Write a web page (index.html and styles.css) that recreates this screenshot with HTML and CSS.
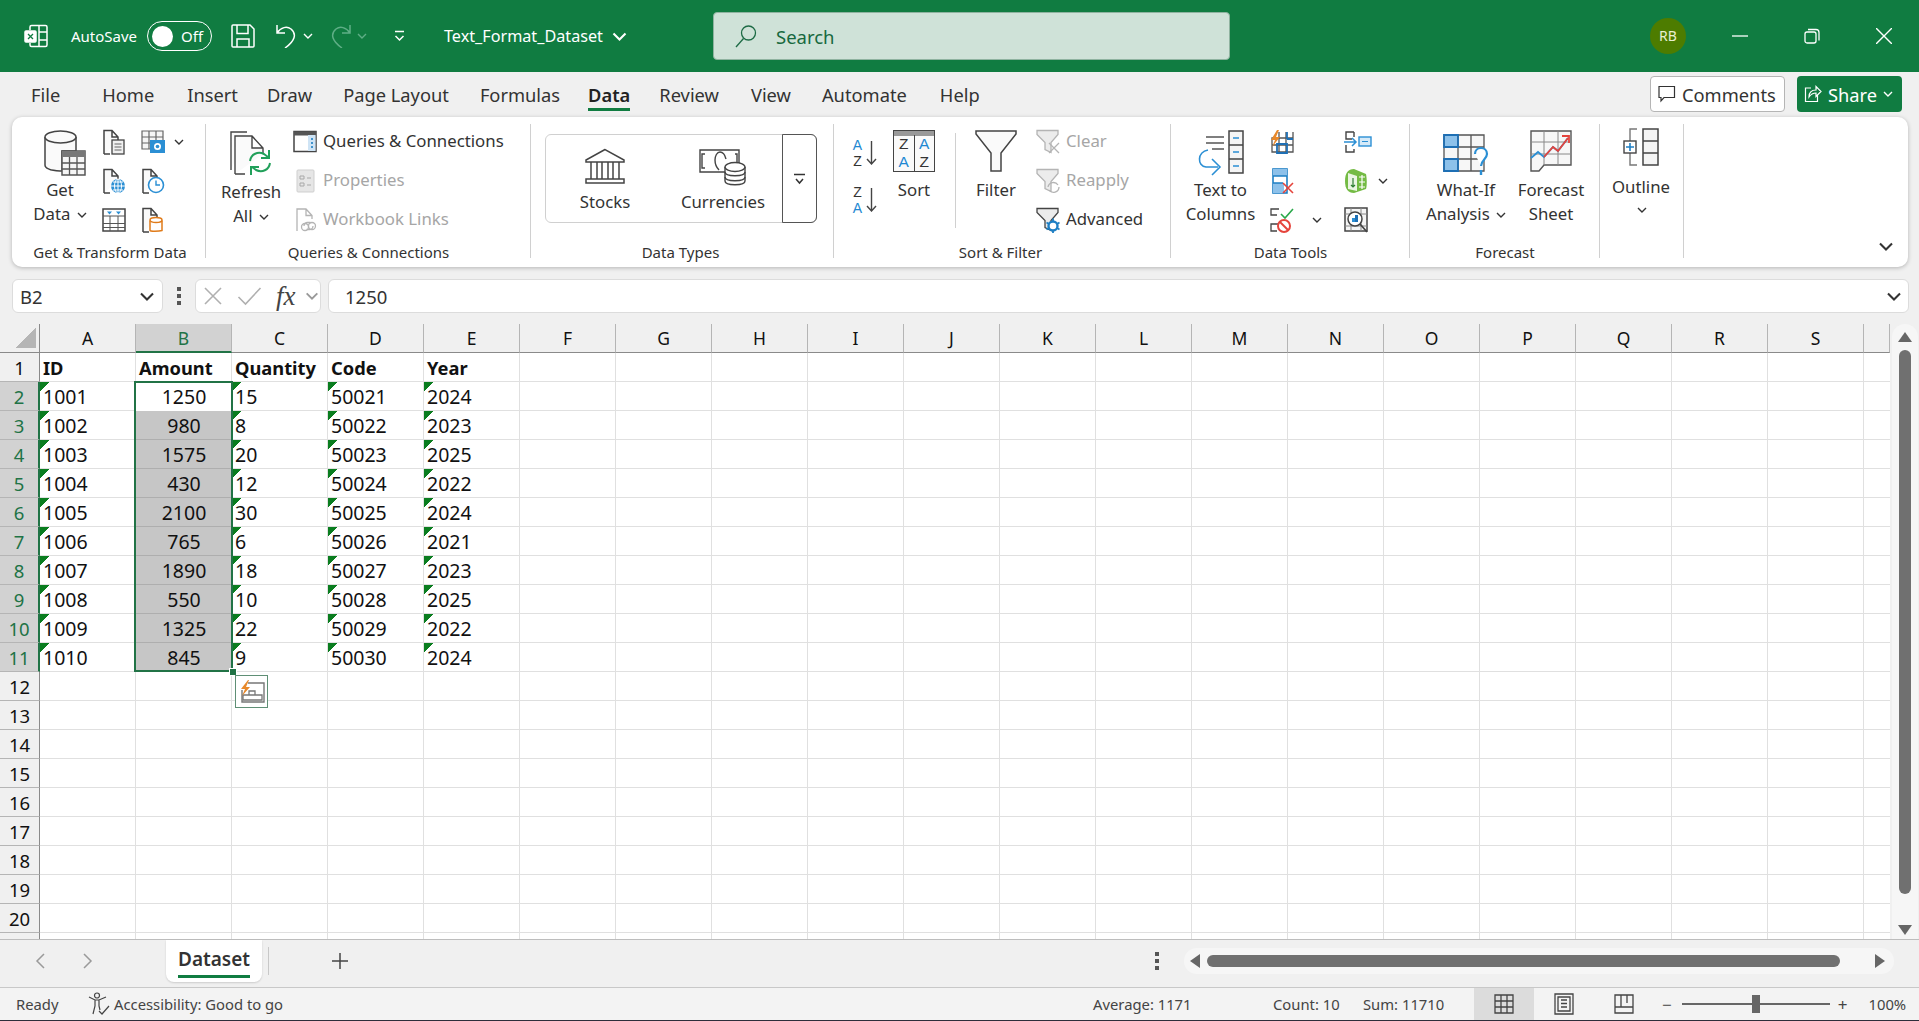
FILE: index.html
```html
<!DOCTYPE html>
<html>
<head lang="en">
    <meta charset="UTF-8">
    <meta name="viewport" content="width=device-width, initial-scale=1">
    <title>Text_Format_Dataset - Excel</title>
    <link rel="stylesheet" href="styles.css">
</head>
<body>
    <svg class="defs">
        <symbol id="chev" viewBox="0 0 10 6"><path d="M1 1l4 4 4-4" fill="none" stroke="currentColor" stroke-width="1.4"/></symbol>
        <symbol id="doc" viewBox="0 0 24 26"><path d="M2 25V1.500h8l6 6.500v5M2 25h6M10 2v6h6" fill="#fafafa" stroke="#444" stroke-width="1.500"/></symbol>
        <symbol id="funnel" viewBox="0 0 24 26"><path d="M1 1.500h21v4l-7 8v10l-6-3v-7l-8-8z" fill="#ececec" stroke="currentColor" stroke-width="1.300"/></symbol>
    </svg>

    <div class="titlebar">
        <svg class="t-logo" width="24" height="24" viewBox="0 0 24 24" fill="none" stroke="#fff" stroke-width="1.500">
            <path d="M6 6V3a1.500 1.500 0 0 1 1.500-1.500h14A1.500 1.500 0 0 1 23 3v18a1.500 1.500 0 0 1-1.500 1.500h-14A1.500 1.500 0 0 1 6 21v-2M15 1.500v21M15 8h8M15 16h8"/>
            <rect x="1" y="7" width="11" height="11" rx="1" fill="#fff"/>
            <path d="M4 10l5 5M9 10l-5 5" stroke="#107c41" stroke-width="1.300"/>
        </svg>
        <span class="autosave">AutoSave</span>
        <div class="toggle"><i class="knob"></i><span>Off</span></div>
        <svg class="t-save" width="24" height="24" viewBox="0 0 24 24" fill="none" stroke="#fff" stroke-width="1.500">
            <path d="M2 1h17l4 4v17a1 1 0 0 1-1 1H2a1 1 0 0 1-1-1V2a1 1 0 0 1 1-1zM6 1.500v8h11v-8M6 23v-8h12v8"/>
        </svg>
        <svg class="t-undo" width="23" height="24" viewBox="0 0 23 24" fill="none" stroke="#fff" stroke-width="1.500">
            <path d="M2 1v8h8M2 9c4-6 10-7 14-4 6 5 4 12-6 19"/>
        </svg>
        <svg class="t-chev" width="10" height="6"><use href="#chev"/></svg>
        <svg class="t-redo" width="23" height="24" viewBox="0 0 23 24" fill="none" stroke="#5fae86" stroke-width="1.500">
            <path d="M21 1v8h-8M21 9c-4-6-10-7-14-4-6 5-4 12 6 19"/>
        </svg>
        <svg class="t-chev dim" width="10" height="6"><use href="#chev"/></svg>
        <svg class="t-custom" width="11" height="12" viewBox="0 0 11 12" fill="none" stroke="#fff" stroke-width="1.500">
            <path d="M1 1.500h9M1.500 6l4 4 4-4"/>
        </svg>
        <span class="doc-name">Text_Format_Dataset</span>
        <svg class="t-chev2" width="15" height="9" viewBox="0 0 10 6"><use href="#chev"/></svg>
        <div class="search">
            <svg width="24" height="24" viewBox="0 0 24 24" fill="none" stroke="#1d6b45" stroke-width="1.300">
                <circle cx="14.500" cy="9" r="7"/><path d="M9.500 14.500L2 23"/>
            </svg>
            <span>Search</span>
        </div>
        <div class="avatar">RB</div>
        <div class="win-btns">
            <svg width="16" height="16" viewBox="0 0 16 16" stroke="#fff" stroke-width="1.300"><path d="M0 8h16"/></svg>
            <svg width="16" height="16" viewBox="0 0 16 16" fill="none" stroke="#fff" stroke-width="1.300"><rect x="1" y="4" width="11" height="11" rx="2"/><path d="M4 1.500h8a3 3 0 0 1 3 3v8"/></svg>
            <svg width="16" height="16" viewBox="0 0 16 16" stroke="#fff" stroke-width="1.400"><path d="M0 0l16 16M16 0L0 16"/></svg>
        </div>
    </div>

    <div class="tabs">
        <span class="tab tab-file">File</span>
        <span class="tab tab-home">Home</span>
        <span class="tab tab-insert">Insert</span>
        <span class="tab">Draw</span>
        <span class="tab">Page Layout</span>
        <span class="tab">Formulas</span>
        <span class="tab active">Data</span>
        <span class="tab tab-review">Review</span>
        <span class="tab">View</span>
        <span class="tab tab-automate">Automate</span>
        <span class="tab">Help</span>
        <div class="comments">
            <svg width="18" height="18" viewBox="0 0 18 18" fill="none" stroke="#333" stroke-width="1.200"><path d="M1 1.500h15.500v11H6l-3 3.500v-3.500H1z"/></svg>
            <span>Comments</span>
        </div>
        <div class="share">
            <svg width="18" height="18" viewBox="0 0 18 18" fill="none" stroke="#fff" stroke-width="1.200"><path d="M7 3H1.500v13.500h12V10M5 12c0-5 3-7 7-7V1.500l5 5-5 5V8c-3 0-5 1-7 4z"/></svg>
            <span>Share</span>
            <svg width="10" height="6"><use href="#chev"/></svg>
        </div>
    </div>

    <div class="ribbon">
        <div class="grp g1">
            <div class="grp-body">
                <div class="big w80">
                    <div class="big-ic">
                        <svg class="nudge" width="42" height="46" viewBox="0 0 42 46">
                            <path d="M1 7v28c0 3.500 6 5.500 15 6h2V21h14V7" fill="#fafafa" stroke="#444" stroke-width="1.500"/>
                            <ellipse cx="16.500" cy="7" rx="15.500" ry="6" fill="#fafafa" stroke="#444" stroke-width="1.500"/>
                            <rect x="18" y="21" width="23" height="24" fill="#f5f5f5" stroke="#555" stroke-width="1.500"/>
                            <rect x="18" y="21" width="23" height="6" fill="#777"/>
                            <path d="M18 33h23M18 39h23M25.500 27v18M33 27v18" stroke="#555" stroke-width="1.300"/>
                        </svg>
                    </div>
                    <span>Get</span>
                    <span>Data <svg class="chev" width="10" height="6"><use href="#chev"/></svg></span>
                </div>
                <div class="col w28 ctr">
                    <div class="row">
                        <svg width="24" height="26" viewBox="0 0 24 26"><use href="#doc" width="24" height="26"/><rect x="10" y="11" width="12" height="14" fill="#f0f0f0" stroke="#444" stroke-width="1.300"/><path d="M12.500 15h7M12.500 18h7M12.500 21h7" stroke="#666"/></svg>
                    </div>
                    <div class="row">
                        <svg width="24" height="26" viewBox="0 0 24 26"><use href="#doc" width="24" height="26"/><circle cx="16" cy="18" r="7" fill="#2b8fd4"/><path d="M9 18h14M16 11v14M11 14h10M11 22h10" stroke="#fff"/><ellipse cx="16" cy="18" rx="3.500" ry="7" fill="none" stroke="#fff"/></svg>
                    </div>
                    <div class="row">
                        <svg width="24" height="24" viewBox="0 0 24 24" fill="none"><rect x="1" y="1" width="22" height="22" stroke="#444" stroke-width="1.500"/><path d="M1 8h22M1 15.500h22M1 19.500h22M8 8v15M16 8v15" stroke="#555"/><path d="M5 3.500h5l-2.500 3zM14 3.500h5l-2.500 3z" fill="#2b8fd4"/></svg>
                    </div>
                </div>
                <div class="col">
                    <div class="row pl13 gap7">
                        <svg width="24" height="24" viewBox="0 0 24 24"><path d="M1 1h21v11H12v7H1zM8 1v18M15 1v11M1 7h21M1 13h11" fill="#f5f5f5" stroke="#666" stroke-width="1.200"/><rect x="9" y="10" width="15" height="13" fill="#2b8fd4"/><circle cx="16.500" cy="16.500" r="3.500" fill="#fff"/><circle cx="16.500" cy="16.500" r="1.800" fill="#2b8fd4"/></svg>
                        <svg class="chev" width="10" height="6"><use href="#chev"/></svg>
                    </div>
                    <div class="row pl13">
                        <svg width="24" height="26" viewBox="0 0 24 26"><use href="#doc" width="24" height="26"/><circle cx="15" cy="17" r="7.500" fill="#fff" stroke="#2b8fd4" stroke-width="1.600"/><path d="M15 12.500V17h4" fill="none" stroke="#2b8fd4" stroke-width="1.400"/></svg>
                    </div>
                    <div class="row pl13">
                        <svg width="24" height="26" viewBox="0 0 24 26"><use href="#doc" width="24" height="26"/><path d="M9 13.500v10c0 1 9 1 12 0v-10" fill="#fff" stroke="#e07b1a" stroke-width="1.500"/><ellipse cx="15" cy="13" rx="6" ry="2.500" fill="#fff" stroke="#e07b1a" stroke-width="1.500"/></svg>
                    </div>
                </div>
            </div>
            <div class="grp-label">Get &amp; Transform Data</div>
        </div>

        <div class="grp g2">
            <div class="grp-body">
                <div class="big w72">
                    <div class="big-ic low">
                        <svg width="42" height="46" viewBox="0 0 42 46" fill="none">
                            <path d="M1 40V2h16M5 44V6h17l11 12v6M5 44h10M22 6v12h11" fill="#fafafa" stroke="#444" stroke-width="1.400"/>
                            <path d="M20 31c1-7 8-10 14-7l4 3M40 33c-1 7-8 10-14 7l-4-3" stroke="#21a05a" stroke-width="2"/>
                            <path d="M39 20v8h-8M21 45v-8h8" stroke="#21a05a" stroke-width="2"/>
                        </svg>
                    </div>
                    <span>Refresh</span>
                    <span>All <svg class="chev" width="10" height="6"><use href="#chev"/></svg></span>
                </div>
                <div class="col pl6">
                    <div class="row gap6">
                        <svg width="24" height="24" viewBox="0 0 24 24"><rect x="1" y="1.500" width="22" height="20" fill="#fff" stroke="#444" stroke-width="1.500"/><rect x="1" y="1.500" width="22" height="4" fill="#555"/><rect x="15" y="5" width="7.500" height="16" fill="#cfe4f5"/><path d="M19 8v2M19 12v2M19 16v2" stroke="#1e7fc4" stroke-width="1.600"/></svg>
                        <span>Queries &amp; Connections</span>
                    </div>
                    <div class="row gap6 off">
                        <svg width="24" height="24" viewBox="0 0 24 24"><rect x="4" y="1" width="17" height="22" rx="1" fill="#e6e6e6" stroke="#cfcfcf"/><path d="M7 7h4v3H7zM7 14h4v3H7z" fill="none" stroke="#a8a8a8"/><path d="M14 9h4M14 16h4" stroke="#a8a8a8"/></svg>
                        <span>Properties</span>
                    </div>
                    <div class="row gap6 off">
                        <svg width="24" height="26" viewBox="0 0 24 26" fill="none" stroke="#b4b4b4" stroke-width="1.300"><path d="M4 24V2h9l6 6.500V12M13 2v6.500h6"/><path d="M11 19a3.500 3.500 0 0 1 3.500-3.500h3M20 19a3.500 3.500 0 0 1-3.500 3.500h-3"/><circle cx="12" cy="20" r="3.500"/><circle cx="19" cy="19" r="3.500"/></svg>
                        <span>Workbook Links</span>
                    </div>
                </div>
            </div>
            <div class="grp-label">Queries &amp; Connections</div>
        </div>

        <div class="grp g3">
            <div class="grp-body">
                <div class="gallery">
                    <div class="gal-item">
                        <div class="gal-ic">
                            <svg width="42" height="37" viewBox="0 0 42 37" fill="none" stroke="#444" stroke-width="1.500">
                                <path d="M21 1.500L2 12v2h38v-2zM2 31h38v4H2zM7 14v17M13 14v17M18 14v17M24 14v17M29 14v17M35 14v17"/>
                            </svg>
                        </div>
                        <span>Stocks</span>
                    </div>
                    <div class="gal-item">
                        <div class="gal-ic">
                            <svg width="48" height="38" viewBox="0 0 48 38" fill="none" stroke="#444" stroke-width="1.400">
                                <path d="M27 24H1V2h39v13M6 6H3v14h3M36 6h2v8"/>
                                <path d="M20 22c-3-3-4-6-4-10s2-8 5-8 5 3 6 7"/>
                                <path d="M26 19v14c0 5 20 5 20 0V19" fill="#fff"/>
                                <ellipse cx="36" cy="19" rx="10" ry="4.500" fill="#fff"/>
                                <path d="M26 24c0 5 20 5 20 0M26 29c0 5 20 5 20 0"/>
                            </svg>
                        </div>
                        <span>Currencies</span>
                    </div>
                    <div class="gal-more">
                        <svg width="11" height="12" viewBox="0 0 11 12" fill="none" stroke="#333" stroke-width="1.500"><path d="M0 1.500h11M2 6l3.500 4L9 6"/></svg>
                    </div>
                </div>
            </div>
            <div class="grp-label">Data Types</div>
        </div>

        <div class="grp g4">
            <div class="grp-body">
                <div class="sort-col">
                    <div class="sort-item">
                        <div class="az"><b class="blue">A</b><b>Z</b></div>
                        <svg width="11" height="24" viewBox="0 0 11 24" fill="none" stroke="#444" stroke-width="1.400"><path d="M5.500 0v23M1 18l4.500 5 4.500-5"/></svg>
                    </div>
                    <div class="sort-item">
                        <div class="az"><b>Z</b><b class="blue">A</b></div>
                        <svg width="11" height="24" viewBox="0 0 11 24" fill="none" stroke="#444" stroke-width="1.400"><path d="M5.500 0v23M1 18l4.500 5 4.500-5"/></svg>
                    </div>
                </div>
                <div class="big w60 ml7">
                    <div class="big-ic">
                        <div class="sort-box">
                            <div class="az tall"><b>Z</b><b class="blue">A</b></div>
                            <div class="az tall"><b class="blue">A</b><b>Z</b></div>
                        </div>
                    </div>
                    <span>Sort</span>
                </div>
                <div class="vsep"></div>
                <div class="big w80">
                    <div class="big-ic">
                        <svg width="42" height="42" viewBox="0 0 42 42" fill="#fafafa" stroke="#444" stroke-width="1.500"><path d="M1 1h40v3L26 23v18H16V23L1 4z"/></svg>
                    </div>
                    <span>Filter</span>
                </div>
                <div class="col">
                    <div class="row gap6 off">
                        <svg width="24" height="26" viewBox="0 0 24 26" color="#b4b4b4"><use href="#funnel" width="24" height="26"/><path d="M13 14l10 10M23 14L13 24" stroke="#b4b4b4" stroke-width="1.300"/></svg>
                        <span>Clear</span>
                    </div>
                    <div class="row gap6 off">
                        <svg width="24" height="26" viewBox="0 0 24 26" color="#b4b4b4"><use href="#funnel" width="24" height="26"/><path d="M12 19a5.500 5.500 0 0 1 10-2M23 19a5.500 5.500 0 0 1-10 3" fill="none" stroke="#b4b4b4" stroke-width="1.300"/></svg>
                        <span>Reapply</span>
                    </div>
                    <div class="row gap6">
                        <svg width="24" height="26" viewBox="0 0 24 26" color="#444"><use href="#funnel" width="24" height="26"/><circle cx="17" cy="19" r="4.500" fill="#fff" stroke="#1e7fc4" stroke-width="2.400"/><path d="M17 11.500v3M17 23.500v2.500M10.500 15.500l2.500 1.500M21 21l2.500 1.500M10.500 22.500l2.500-1.500M21 17l2.500-1.500" stroke="#1e7fc4" stroke-width="1.800"/></svg>
                        <span>Advanced</span>
                    </div>
                </div>
            </div>
            <div class="grp-label">Sort &amp; Filter</div>
        </div>

        <div class="grp g5">
            <div class="grp-body">
                <div class="big w99">
                    <div class="big-ic">
                        <svg width="46" height="46" viewBox="0 0 46 46" fill="none">
                            <path d="M8 7h18M8 13h18M14 19h12" stroke="#555" stroke-width="1.400"/>
                            <path d="M31 1h14v42H31z" fill="#f5f5f5" stroke="#444" stroke-width="1.500"/>
                            <path d="M31 15h14M31 29h14" stroke="#444" stroke-width="1.500"/>
                            <path d="M35 8h6M35 22h6M35 36h6" stroke="#2b8fd4" stroke-width="1.500"/>
                            <path d="M10 20C-1 22-1 36 8 37h12M14 29l8 8-8 8" stroke="#2b8fd4" stroke-width="1.600"/>
                        </svg>
                    </div>
                    <span>Text to</span>
                    <span>Columns</span>
                </div>
                <div class="col w74">
                    <div class="row">
                        <svg width="24" height="24" viewBox="0 0 24 24" fill="none"><path d="M2 22V8h21v14zM9 2v20M16 2v20M23 2v20M2 15h21" stroke="#555" stroke-width="1.300"/><path d="M7 14h10v9H7zM17 9h6M17 2v7" stroke="#1e6fb4" stroke-width="1.800"/><path d="M7 0L1 10h4l-3 7 8-10H6l3-7z" fill="#e8892b"/></svg>
                    </div>
                    <div class="row">
                        <svg width="24" height="26" viewBox="0 0 24 26" fill="none"><rect x="3" y="1" width="14" height="24" fill="#fff" stroke="#1e7fc4" stroke-width="1.600"/><rect x="3" y="1" width="14" height="7" fill="#8dc1ea"/><rect x="3" y="15" width="11" height="10" fill="#8dc1ea"/><path d="M3 8h14M3 15h10" stroke="#1e7fc4" stroke-width="1.300"/><path d="M13 15l10 10M23 15L13 25" stroke="#e5443c" stroke-width="1.600"/></svg>
                    </div>
                    <div class="row">
                        <svg width="24" height="26" viewBox="0 0 24 26" fill="none"><path d="M9 2H1v6h6M9 17H1v7h6" stroke="#444" stroke-width="1.300"/><path d="M11 7l4 4 8-9" stroke="#2aa84a" stroke-width="1.600"/><circle cx="14" cy="19" r="6" stroke="#e5443c" stroke-width="2"/><path d="M10 15l8 8" stroke="#e5443c" stroke-width="2"/></svg>
                        <svg class="chev ml18" width="10" height="6"><use href="#chev"/></svg>
                    </div>
                </div>
                <div class="col">
                    <div class="row">
                        <svg width="28" height="24" viewBox="0 0 28 24" fill="none"><path d="M10 2H2v7h6M2 15v7h8v-3M10 2v5" stroke="#444" stroke-width="1.400"/><path d="M0 12h12M8 8l4 4-4 4" stroke="#2b8fd4" stroke-width="1.500"/><rect x="15" y="7" width="12" height="9" fill="#d6eaf8" stroke="#2b8fd4" stroke-width="1.400"/><path d="M18 11.500h6" stroke="#2b8fd4"/></svg>
                    </div>
                    <div class="row gap8">
                        <svg width="24" height="26" viewBox="0 0 24 26"><path d="M10 1l12 5c1 5 1 12 0 15l-12 4c-6 0-9-4-9-12S4 1 10 1z" fill="#74bb44"/><path d="M4 5l9 3v15l-9-2z" fill="#fff" opacity=".85"/><path d="M7 17l2 2 2-2M9 10v9" fill="none" stroke="#2d7d32" stroke-width="1.200"/><path d="M15 9h6M15 14h6M15 19h6M18 7v14" stroke="#fff" stroke-width="1.200"/></svg>
                        <svg class="chev" width="10" height="6"><use href="#chev"/></svg>
                    </div>
                    <div class="row">
                        <svg width="24" height="26" viewBox="0 0 24 26" fill="none"><rect x="1" y="1" width="22" height="23" fill="#f5f5f5" stroke="#444" stroke-width="1.500"/><path d="M1 7h22M1 19h22M7 1v23M17 1v23" stroke="#888"/><circle cx="11" cy="12" r="7" fill="#fff" stroke="#444" stroke-width="1.500"/><rect x="8" y="11" width="3" height="4" fill="#2b8fd4"/><rect x="11" y="8" width="3" height="7" fill="#1e6fb4"/><path d="M16 17l7 8" stroke="#444" stroke-width="1.800"/></svg>
                    </div>
                </div>
            </div>
            <div class="grp-label">Data Tools</div>
        </div>

        <div class="grp g6">
            <div class="grp-body">
                <div class="big w112">
                    <div class="big-ic">
                        <svg width="46" height="46" viewBox="0 0 46 46" fill="none">
                            <rect x="1" y="5" width="40" height="37" fill="#f7f7f7"/>
                            <rect x="1" y="5" width="14" height="12" fill="#8dc1ea"/>
                            <rect x="1" y="29" width="14" height="12" fill="#8dc1ea"/>
                            <path d="M1 5h40v36H1zM15 5v36M28 5v36M1 17h40M1 29h40" stroke="#555" stroke-width="1.300"/>
                            <path d="M1 5h14v12H1zM1 29h14v12H1z" stroke="#1e6fb4" stroke-width="1.800"/>
                            <path d="M32 24c0-8 12-8 12 0 0 5-6 6-6 12" fill="#fff" stroke="#2b8fd4" stroke-width="2.200"/>
                            <path d="M38 40v5" stroke="#2b8fd4" stroke-width="2.400"/>
                        </svg>
                    </div>
                    <span>What-If</span>
                    <span>Analysis <svg class="chev" width="10" height="6"><use href="#chev"/></svg></span>
                </div>
                <div class="big w58">
                    <div class="big-ic">
                        <svg width="42" height="42" viewBox="0 0 42 42" fill="none">
                            <path d="M1 1h40v34H14l-5 6H1z" fill="#f7f7f7" stroke="#555" stroke-width="1.400"/>
                            <path d="M1 12h40M1 24h40M14 1v34M28 1v34" stroke="#888"/>
                            <path d="M1 28l7-6 6 5 9-10 5 4 10-13" stroke="#2b8fd4" stroke-width="1.800"/>
                            <path d="M14 27l9-10 5 4 10-13" stroke="#e5443c" stroke-width="1.800"/>
                            <path d="M32 6h7v7" stroke="#e5443c" stroke-width="1.800"/>
                        </svg>
                    </div>
                    <span>Forecast</span>
                    <span>Sheet</span>
                </div>
            </div>
            <div class="grp-label">Forecast</div>
        </div>

        <div class="grp g7">
            <div class="grp-body">
                <div class="big w82">
                    <div class="big-ic short">
                        <svg width="36" height="38" viewBox="0 0 36 38" fill="none">
                            <path d="M14 1H7v12M7 25v12h7" stroke="#777" stroke-width="1.400"/>
                            <path d="M20 1h15v36H20zM20 13h15M20 25h15" fill="#f5f5f5" stroke="#444" stroke-width="1.500"/>
                            <rect x="1" y="13" width="12" height="12" fill="#fff" stroke="#444" stroke-width="1.400"/>
                            <path d="M3 19h8M7 15v8" stroke="#1e7fc4" stroke-width="1.600"/>
                        </svg>
                    </div>
                    <span>Outline</span>
                    <svg class="chev o-chev" width="10" height="6"><use href="#chev"/></svg>
                </div>
            </div>
        </div>

        <svg class="collapse" width="16" height="9" viewBox="0 0 10 6"><use href="#chev"/></svg>
    </div>

    <div class="formula">
        <div class="namebox">
            <span>B2</span>
            <svg width="16" height="9" viewBox="0 0 10 6"><use href="#chev"/></svg>
        </div>
        <div class="dots"><i></i><i></i><i></i></div>
        <div class="fx-box">
            <svg width="20" height="20" viewBox="0 0 20 20" stroke="#b0b0b0" stroke-width="1.600"><path d="M2 2l16 16M18 2L2 18"/></svg>
            <svg width="25" height="20" viewBox="0 0 24 20" fill="none" stroke="#b0b0b0" stroke-width="1.600"><path d="M1 11l7 7L23 2"/></svg>
            <span class="fx">fx</span>
            <svg class="fx-chev" width="14" height="8" viewBox="0 0 10 6"><use href="#chev"/></svg>
        </div>
        <div class="fbar">
            <span>1250</span>
            <svg width="16" height="9" viewBox="0 0 10 6"><use href="#chev"/></svg>
        </div>
    </div>

    <div class="sheet">
        <div class="grid">
            <div class="corner"></div>
            <div class="ch">A</div><div class="ch sel">B</div><div class="ch">C</div><div class="ch">D</div><div class="ch">E</div><div class="ch">F</div><div class="ch">G</div><div class="ch">H</div><div class="ch">I</div><div class="ch">J</div><div class="ch">K</div><div class="ch">L</div><div class="ch">M</div><div class="ch">N</div><div class="ch">O</div><div class="ch">P</div><div class="ch">Q</div><div class="ch">R</div><div class="ch">S</div><div class="ch"></div>

            <div class="rh">1</div><div class="c b">ID</div><div class="c b">Amount</div><div class="c b">Quantity</div><div class="c b">Code</div><div class="c b">Year</div>
            <div class="rh sel">2</div><div class="c t">1001</div><div class="c m first">1250</div><div class="c t">15</div><div class="c t">50021</div><div class="c t">2024</div>
            <div class="rh sel">3</div><div class="c t">1002</div><div class="c m">980</div><div class="c t">8</div><div class="c t">50022</div><div class="c t">2023</div>
            <div class="rh sel">4</div><div class="c t">1003</div><div class="c m">1575</div><div class="c t">20</div><div class="c t">50023</div><div class="c t">2025</div>
            <div class="rh sel">5</div><div class="c t">1004</div><div class="c m">430</div><div class="c t">12</div><div class="c t">50024</div><div class="c t">2022</div>
            <div class="rh sel">6</div><div class="c t">1005</div><div class="c m">2100</div><div class="c t">30</div><div class="c t">50025</div><div class="c t">2024</div>
            <div class="rh sel">7</div><div class="c t">1006</div><div class="c m">765</div><div class="c t">6</div><div class="c t">50026</div><div class="c t">2021</div>
            <div class="rh sel">8</div><div class="c t">1007</div><div class="c m">1890</div><div class="c t">18</div><div class="c t">50027</div><div class="c t">2023</div>
            <div class="rh sel">9</div><div class="c t">1008</div><div class="c m">550</div><div class="c t">10</div><div class="c t">50028</div><div class="c t">2025</div>
            <div class="rh sel">10</div><div class="c t">1009</div><div class="c m">1325</div><div class="c t">22</div><div class="c t">50029</div><div class="c t">2022</div>
            <div class="rh sel">11</div><div class="c t">1010</div><div class="c m">845</div><div class="c t">9</div><div class="c t">50030</div><div class="c t">2024</div>
            <div class="rh">12</div>
            <div class="rh">13</div>
            <div class="rh">14</div>
            <div class="rh">15</div>
            <div class="rh">16</div>
            <div class="rh">17</div>
            <div class="rh">18</div>
            <div class="rh">19</div>
            <div class="rh">20</div>
            <div class="rh"></div>

            <div class="selection"><i class="handle"></i></div>
            <div class="flash">
                <svg width="26" height="24" viewBox="0 0 26 24" fill="none">
                    <path d="M9 3h16v19H3V10" stroke="#777" stroke-width="1.400"/>
                    <path d="M4 15h19v5H4zM10 15v-4h6v4" stroke="#777" stroke-width="1.300"/>
                    <path d="M9 0L2 9h4l-3 7 8-9H7l3-7z" fill="#e8892b"/>
                </svg>
            </div>
        </div>
        <div class="vscroll">
            <svg width="14" height="10" viewBox="0 0 14 10" fill="#666"><path d="M7 0l7 10H0z"/></svg>
            <div class="vthumb"></div>
            <svg width="14" height="10" viewBox="0 0 14 10" fill="#666"><path d="M7 10l7-10H0z"/></svg>
        </div>
    </div>

    <div class="tabbar">
        <svg class="nav" width="10" height="16" viewBox="0 0 10 16" fill="none" stroke="#9a9a9a" stroke-width="1.500"><path d="M9 1L2 8l7 7"/></svg>
        <svg class="nav nav2" width="10" height="16" viewBox="0 0 10 16" fill="none" stroke="#9a9a9a" stroke-width="1.500"><path d="M1 1l7 7-7 7"/></svg>
        <div class="sheet-tab"><span>Dataset</span></div>
        <i class="tab-sep"></i>
        <svg class="plus" width="18" height="18" viewBox="0 0 18 18" stroke="#444" stroke-width="1.500"><path d="M9 1v16M1 9h16"/></svg>
        <div class="dots hdots"><i></i><i></i><i></i></div>
        <div class="hscroll">
            <svg width="10" height="14" viewBox="0 0 10 14" fill="#666"><path d="M0 7l10-7v14z"/></svg>
            <div class="hthumb"></div>
            <svg width="10" height="14" viewBox="0 0 10 14" fill="#666"><path d="M10 7L0 0v14z"/></svg>
        </div>
    </div>

    <div class="status">
        <span class="ready">Ready</span>
        <svg class="acc-ic" width="22" height="24" viewBox="0 0 22 24" fill="none" stroke="#444" stroke-width="1.200">
            <circle cx="9" cy="3.500" r="2.500"/><path d="M1 5l6 3h4l7-3M7 8v6l-2 8M11 8v6l1 4M11 19l3 3 7-8"/>
        </svg>
        <span class="acc">Accessibility: Good to go</span>
        <span class="st-avg">Average: 1171</span>
        <span class="st-count">Count: 10</span>
        <span class="st-sum">Sum: 11710</span>
        <div class="view on">
            <svg width="20" height="20" viewBox="0 0 20 20" fill="none" stroke="#444" stroke-width="1.300"><path d="M1 1h18v18H1zM1 7h18M1 13h18M7 1v18M13 1v18"/></svg>
        </div>
        <div class="view">
            <svg width="20" height="22" viewBox="0 0 20 22" fill="none" stroke="#444" stroke-width="1.300"><path d="M1 1h18v20H1zM4 4h12v14H4zM7 7h6M7 10.500h6M7 14h6"/></svg>
        </div>
        <div class="view">
            <svg width="20" height="20" viewBox="0 0 20 20" fill="none" stroke="#444" stroke-width="1.300"><path d="M1 1h18v18H1zM1 13h18M7 1v12M13 1v8"/></svg>
        </div>
        <span class="zm">&minus;</span>
        <div class="slider"><i></i></div>
        <span class="zm">+</span>
        <span class="zoom-val">100%</span>
    </div>
</body>
</html>
```

FILE: styles.css
```css
*{
    box-sizing: border-box;
}
html, body{
    margin: 0;
    padding: 0;
    height: 100%;
}
body{
    width: 1919px;
    height: 1021px;
    overflow: hidden;
    background-color: #f0f0f0;
    color: #333;
    font-family: "Noto Sans", "Open Sans", sans-serif;
    font-size: 16px;
}
svg{
    display: block;
    flex: none;
}
.defs{
    display: none;
}

/* title bar */
.titlebar{
    display: flex;
    align-items: center;
    height: 72px;
    padding-left: 24px;
    background-color: #107c41;
    color: #fff;
}
.autosave{
    margin-left: 23px;
    width: 76px;
    font-size: 15px;
}
.toggle{
    display: flex;
    align-items: center;
    width: 65px;
    height: 30px;
    padding-left: 4px;
    border: 1px solid #fff;
    border-radius: 15px;
    font-size: 15px;
}
.knob{
    width: 21px;
    height: 21px;
    margin-right: 8px;
    border-radius: 50%;
    background-color: #fff;
}
.t-save{
    margin-left: 19px;
}
.t-undo{
    margin-left: 20px;
}
.t-chev{
    margin-left: 5px;
    color: #fff;
}
.t-chev.dim{
    color: #5fae86;
}
.t-redo{
    margin-left: 16px;
}
.t-custom{
    margin-left: 27px;
}
.doc-name{
    margin-left: 39px;
    width: 168px;
    font-size: 16.200px;
    white-space: nowrap;
}
.t-chev2{
    color: #fff;
}
.search{
    display: flex;
    align-items: center;
    gap: 18px;
    width: 517px;
    height: 48px;
    margin-left: 86px;
    padding-left: 20px;
    border: 1px solid #8fb3a0;
    border-radius: 4px;
    background-color: #cfe2d8;
    color: #17693f;
    font-size: 18.500px;
}
.avatar{
    width: 36px;
    height: 36px;
    margin-left: 420px;
    border-radius: 50%;
    background-color: #4d7c00;
    color: #e8efd0;
    font-size: 14px;
    line-height: 36px;
    text-align: center;
}
.win-btns{
    display: flex;
    gap: 56px;
    margin-left: 46px;
}

/* menu tabs */
.tabs{
    display: flex;
    align-items: flex-start;
    gap: 31px;
    height: 45px;
    padding-left: 31px;
    color: #333;
    font-size: 18.300px;
}
.tab{
    height: 39px;
    padding-top: 11px;
    line-height: 24px;
}
.tab-file{
    margin-right: 11px;
}
.tab-home{
    margin-right: 2px;
}
.tab-insert{
    margin-right: -2px;
}
.tab.active{
    margin-left: -3px;
    margin-right: -2px;
    border-bottom: 3px solid #107c41;
    color: #222;
    font-weight: 600;
}
.tab-review{
    margin-right: 1px;
}
.tab-automate{
    margin-right: 2px;
}
.comments{
    display: flex;
    align-items: center;
    gap: 6px;
    height: 36px;
    margin-top: 4px;
    margin-left: auto;
    padding-left: 7px;
    width: 135px;
    border: 1px solid #b5b5b5;
    border-radius: 4px;
    background-color: #fff;
}
.share{
    display: flex;
    align-items: center;
    gap: 6px;
    width: 105px;
    height: 36px;
    margin-top: 4px;
    margin-left: -19px;
    margin-right: 17px;
    padding-left: 7px;
    border-radius: 4px;
    background-color: #107c41;
    color: #fff;
}

/* ribbon */
.ribbon{
    display: flex;
    height: 150px;
    margin: 0 11px 0 12px;
    padding-top: 5px;
    border-radius: 10px;
    background-color: #fff;
    box-shadow: 0 1px 4px rgba(0,0,0,.25);
    font-size: 16.800px;
}
.grp{
    flex: none;
    height: 141px;
    background: linear-gradient(#d0d0d0, #d0d0d0) right 2px / 1px 134px no-repeat;
}
.g1{ width: 194px; padding-left: 8px; }
.g2{ width: 325px; padding-left: 9px; }
.g3{ width: 303px; padding-left: 14px; }
.g4{ width: 337px; padding-left: 17px; }
.g5{ width: 239px; }
.g6{ width: 190px; }
.g7{ width: 84px; }
.grp-body{
    display: flex;
    height: 120px;
}
.grp-label{
    font-size: 15px;
    line-height: 20px;
    text-align: center;
}
.g1 .grp-label{ margin-left: -6px; }
.g2 .grp-label{ margin-left: -9px; }
.g3 .grp-label{ margin-left: -14px; padding-right: 4px; }
.g4 .grp-label{ margin-left: -17px; padding-right: 4px; }
.big{
    display: flex;
    flex: none;
    flex-direction: column;
    align-items: center;
    line-height: 24px;
    white-space: nowrap;
}
.big-ic{
    height: 56px;
    padding-top: 8px;
}
.big-ic.low{
    height: 58px;
}
.big-ic.short{
    height: 53px;
    padding-top: 6px;
}
.nudge{
    margin-left: 10px;
}
.chev{
    display: inline-block;
    vertical-align: 2px;
    color: #333;
    margin-left: 2px;
}
.o-chev{
    margin-top: 8px;
}
.w28{ width: 28px; }
.w58{ width: 58px; }
.w60{ width: 60px; }
.w72{ width: 72px; }
.w74{ width: 74px; }
.w80{ width: 80px; }
.w82{ width: 82px; }
.w99{ width: 99px; }
.w112{ width: 112px; }
.ml7{ margin-left: 7px; }
.ml18{ margin-left: 18px; }
.pl6{ padding-left: 6px; }
.col{
    display: flex;
    flex: none;
    flex-direction: column;
}
.col.ctr .row{
    justify-content: center;
}
.row{
    display: flex;
    align-items: center;
    height: 39px;
    white-space: nowrap;
}
.row span{
    margin-top: -2px;
}
.pl13{ padding-left: 13px; }
.gap6{ gap: 6px; }
.gap7{ gap: 7px; }
.gap8{ gap: 8px; }
.off{
    color: #a6a6a6;
}
.gallery{
    display: flex;
    width: 272px;
    height: 89px;
    margin-top: 12px;
    border: 1px solid #d0d0d0;
    border-radius: 6px;
}
.gal-item{
    display: flex;
    flex-direction: column;
    align-items: center;
    width: 118px;
    line-height: 24px;
}
.gal-ic{
    height: 55px;
    padding-top: 13px;
}
.gal-more{
    display: flex;
    align-items: center;
    justify-content: center;
    flex: 1;
    margin: -1px -1px -1px 0;
    border: 1px solid #555;
    border-radius: 0 6px 6px 0;
}
.sort-col{
    width: 26px;
    padding-top: 15px;
}
.sort-item{
    display: flex;
    align-items: center;
    justify-content: space-between;
    height: 32px;
    margin-bottom: 15px;
}
.az{
    display: flex;
    flex-direction: column;
    width: 13px;
    color: #333;
    font-family: "Liberation Sans", sans-serif;
    font-size: 14px;
    line-height: 16px;
    text-align: center;
}
.az b{
    font-weight: 400;
}
.az .blue{
    color: #1e88d2;
}
.sort-box{
    display: flex;
    width: 42px;
    height: 42px;
    padding-top: 4px;
    border: 1.500px solid #444;
    background: linear-gradient(#999, #999) top / 100% 5px no-repeat #fafafa;
}
.az.tall{
    flex: 1;
    line-height: 18px;
    font-size: 15.500px;
}
.az.tall + .az.tall{
    border-left: 1px solid #444;
}
.vsep{
    flex: none;
    width: 1px;
    height: 95px;
    margin: 11px 0 0 11px;
    background-color: #d0d0d0;
}
.collapse{
    margin-left: auto;
    margin-right: 14px;
    margin-bottom: 16px;
    align-self: flex-end;
    color: #333;
}

/* formula bar */
.formula{
    display: flex;
    align-items: center;
    height: 34px;
    margin-top: 12px;
    padding-left: 12px;
    font-size: 16px;
}
.namebox{
    display: flex;
    align-items: center;
    justify-content: space-between;
    width: 151px;
    height: 34px;
    padding: 0 7px;
    border: 1px solid #dcdcdc;
    border-radius: 6px;
    background-color: #fff;
    font-size: 18.500px;
}
.dots{
    display: flex;
    flex-direction: column;
    gap: 3px;
    width: 4px;
    margin: 0 14px;
}
.dots i{
    width: 4px;
    height: 4px;
    background-color: #555;
}
.fx-box{
    display: flex;
    align-items: center;
    width: 126px;
    height: 34px;
    padding-left: 7px;
    border: 1px solid #dcdcdc;
    border-radius: 6px;
    background-color: #fff;
}
.fx-box svg + svg{
    margin-left: 14px;
}
.fx{
    margin-left: 14px;
    color: #444;
    font-family: "Liberation Serif", serif;
    font-size: 27px;
    font-style: italic;
    line-height: 30px;
}
.fx-box .fx-chev{
    margin-left: 9px;
    color: #999;
}
.fbar{
    display: flex;
    align-items: center;
    justify-content: space-between;
    width: 1581px;
    height: 34px;
    margin-left: 7px;
    padding: 0 6px 0 16px;
    border: 1px solid #dcdcdc;
    border-radius: 6px;
    background-color: #fff;
    font-size: 18.500px;
}

/* grid */
.sheet{
    display: flex;
    height: 615px;
    margin-top: 11px;
}
.grid{
    position: relative;
    display: grid;
    grid-template-columns: 40px repeat(19, 96px) 26px;
    grid-auto-rows: 29px;
    width: 1890px;
    overflow: hidden;
    background-color: #fff;
    background-image: linear-gradient(to left, #e0e0e0 1px, transparent 1px), linear-gradient(to top, #e0e0e0 1px, transparent 1px);
    background-position: 40px 0, 0 0;
    background-size: 96px 100%, 100% 29px;
    color: #111;
    font-size: 19.500px;
}
.corner{
    border-right: 1px solid #8a8a8a;
    border-bottom: 1px solid #8a8a8a;
    background: linear-gradient(to bottom right, transparent 50%, #b5b5b5 50%) 15px 4px / 21px 20px no-repeat #f0f0f0;
}
.ch{
    border-right: 1px solid #b5b5b5;
    border-bottom: 1px solid #8a8a8a;
    background-color: #f0f0f0;
    font-size: 17.500px;
    line-height: 29px;
    text-align: center;
}
.ch.sel{
    border-bottom: 2px solid #217346;
    background-color: #d2d2d2;
    color: #217346;
}
.rh{
    grid-column: 1;
    border-right: 1px solid #8a8a8a;
    border-bottom: 1px solid #b5b5b5;
    background-color: #f0f0f0;
    font-size: 18.500px;
    line-height: 29px;
    text-align: center;
}
.rh.sel{
    border-right: 2px solid #217346;
    background-color: #d2d2d2;
    color: #217346;
}
.c{
    padding-left: 3px;
    line-height: 29px;
    white-space: nowrap;
}
.c.b{
    font-weight: 700;
    font-size: 18.300px;
}
.c.t{
    background: linear-gradient(135deg, #0a7d1f 50%, transparent 50%) 0 0 / 10px 9px no-repeat;
}
.c.m{
    border-bottom: 1px solid #aeaeae;
    background-color: #c6c6c6;
    text-align: center;
    padding-left: 0;
}
.c.m.first{
    border-bottom: 0;
    background-color: #fff;
}
.selection{
    position: absolute;
    left: 134px;
    top: 57px;
    width: 99px;
    height: 291px;
    border: 2.500px solid #217346;
}
.handle{
    position: absolute;
    right: -6px;
    bottom: -6px;
    width: 8px;
    height: 8px;
    border: 1px solid #fff;
    background-color: #217346;
}
.flash{
    position: absolute;
    left: 235px;
    top: 351px;
    display: flex;
    align-items: center;
    justify-content: center;
    width: 33px;
    height: 33px;
    border: 1px solid #5f8f75;
    background-color: #fff;
}
.vscroll{
    display: flex;
    flex-direction: column;
    align-items: center;
    width: 26px;
    margin-left: 2px;
    padding-top: 8px;
    border-radius: 13px 13px 0 0;
    background-color: #f6f6f6;
}
.vthumb{
    width: 12px;
    height: 544px;
    margin: 8px 0 31px;
    border-radius: 6px;
    background-color: #707070;
}

/* sheet tabs */
.tabbar{
    display: flex;
    align-items: center;
    height: 48px;
    padding-left: 35px;
    border-top: 1px solid #bdbdbd;
    padding-bottom: 5px;
}
.nav2{
    margin-left: 38px;
}
.sheet-tab{
    align-self: flex-start;
    width: 96px;
    height: 42px;
    margin-left: 73px;
    padding: 3px 0 0 12px;
    border-radius: 0 0 8px 8px;
    background-color: #fff;
    box-shadow: 0 1px 2px rgba(0,0,0,.15);
    color: #333;
    font-size: 19px;
    font-weight: 600;
}
.sheet-tab span{
    display: block;
    width: 72px;
    height: 35px;
    border-bottom: 3px solid #107c41;
    line-height: 32px;
}
.tab-sep{
    width: 1px;
    height: 28px;
    margin-left: 6px;
    background-color: #c8c8c8;
}
.plus{
    margin-left: 62px;
}
.hdots{
    margin: 0 0 0 806px;
}
.hscroll{
    display: flex;
    align-items: center;
    width: 710px;
    height: 26px;
    margin-left: 25px;
    padding: 0 6px;
    border-radius: 13px;
    background-color: #f6f6f6;
}
.hthumb{
    width: 633px;
    height: 12px;
    margin: 0 35px 0 7px;
    border-radius: 6px;
    background-color: #707070;
}

/* status bar */
.status{
    display: flex;
    align-items: center;
    height: 34px;
    padding-left: 16px;
    border-top: 1px solid #c8c8c8;
    border-bottom: 1px solid #2d2d3a;
    background-color: #f3f3f3;
    color: #444;
    font-size: 14.800px;
}
.ready{
    width: 44px;
}
.acc-ic{
    margin-left: 28px;
}
.acc{
    width: 979px;
    margin-left: 4px;
}
.st-avg{
    width: 180px;
}
.st-count{
    width: 90px;
}
.st-sum{
    width: 111px;
}
.view{
    display: flex;
    align-items: center;
    justify-content: center;
    width: 60px;
    height: 100%;
}
.view.on{
    background-color: #dcdcdc;
}
.zm{
    margin-left: 8px;
    font-size: 17px;
}
.slider{
    position: relative;
    width: 148px;
    height: 2px;
    margin-left: 10px;
    background-color: #666;
}
.slider i{
    position: absolute;
    left: 70px;
    top: -8px;
    width: 8px;
    height: 18px;
    background-color: #666;
}
.status .slider + .zm{
    margin-left: 8px;
}
.zoom-val{
    margin-left: 21px;
    white-space: nowrap;
}
```
